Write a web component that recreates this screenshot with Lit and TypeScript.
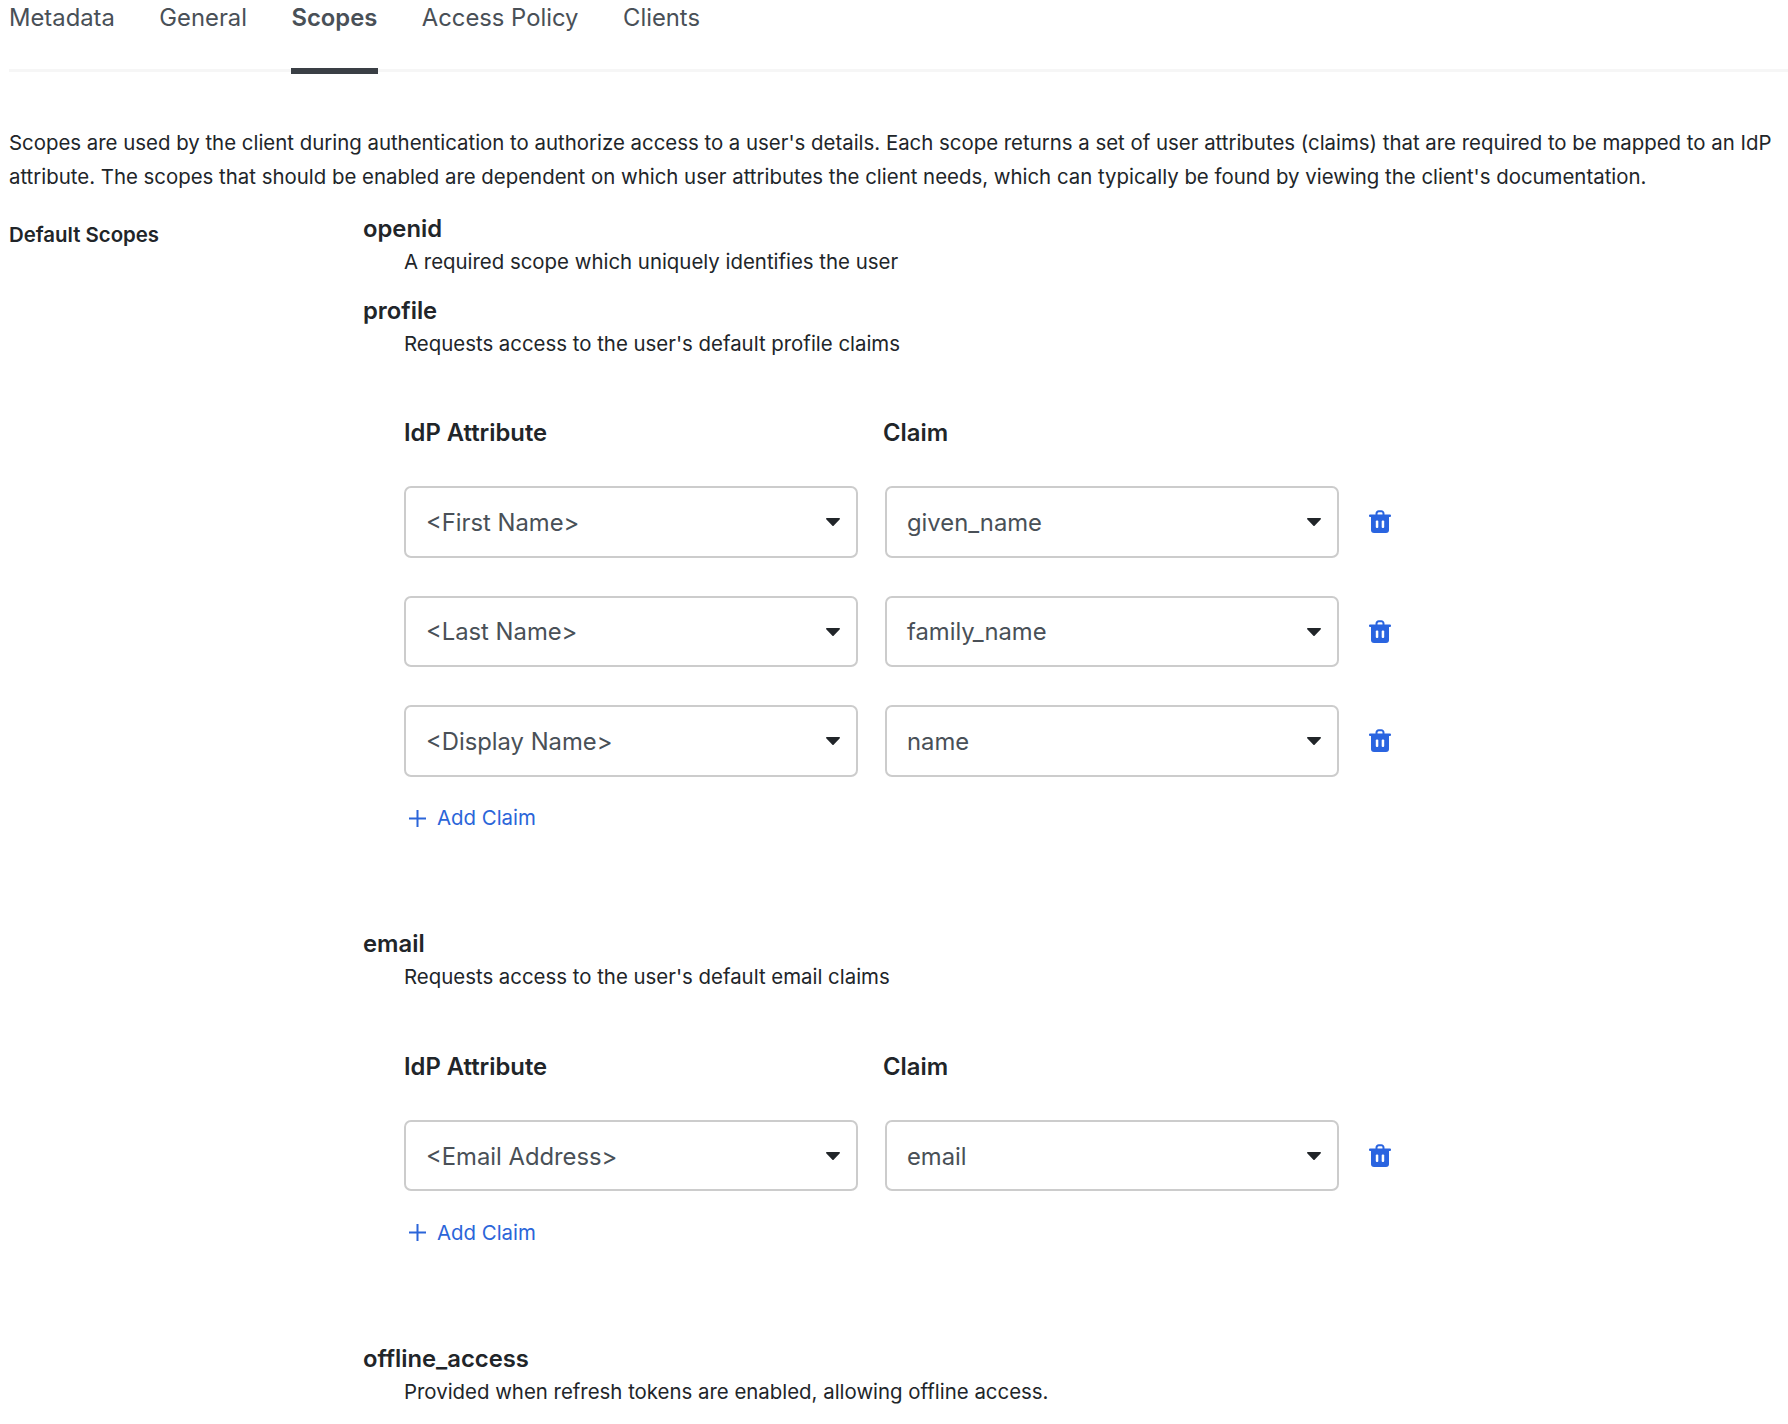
import { LitElement, css, html } from "lit";
import { customElement } from "lit/decorators.js";

type Mapping = { attr: string; claim: string };
type Scope = { name: string; desc: string; mappings?: Mapping[] };

const SCOPES: Scope[] = [
  { name: "openid", desc: "A required scope which uniquely identifies the user" },
  {
    name: "profile",
    desc: "Requests access to the user's default profile claims",
    mappings: [
      { attr: "<First Name>", claim: "given_name" },
      { attr: "<Last Name>", claim: "family_name" },
      { attr: "<Display Name>", claim: "name" },
    ],
  },
  {
    name: "email",
    desc: "Requests access to the user's default email claims",
    mappings: [{ attr: "<Email Address>", claim: "email" }],
  },
  { name: "offline_access", desc: "Provided when refresh tokens are enabled, allowing offline access." },
];

const TABS = ["Metadata", "General", "Scopes", "Access Policy", "Clients"];

@customElement("app-root")
export class AppRoot extends LitElement {
  static styles = css`
    :host {
      display: block;
      padding-left: 9px;
      background: #fff;
      color: #212529;
      font-family: Inter, "Liberation Sans", sans-serif;
      font-size: 20.4px;
      line-height: 34px;
    }

    .tabs {
      display: flex;
      gap: 44.5px;
      border-bottom: 3px solid #f6f6f6;
    }
    .tab {
      font-size: 23.8px;
      color: #495057;
      padding: 1px 0 33px;
      border-bottom: 6px solid transparent;
      margin-bottom: -5px;
    }
    .tab.active {
      font-weight: 600;
      border-bottom-color: #3a3f45;
      padding-inline: 1px;
      margin-inline: -1px;
    }

    .intro {
      margin: 54px 0 18px;
    }

    .body {
      display: grid;
      grid-template-columns: 354px 1fr;
    }
    .label {
      font-weight: 600;
      padding-top: 6px;
    }

    .scope {
      margin-bottom: 15.5px;
    }
    .scope-name {
      font-size: 23.8px;
      font-weight: 600;
    }
    .scope-desc {
      margin-left: 41px;
      line-height: 32px;
    }

    .claims {
      margin: 56.5px 0 92px 41px;
    }
    .claims-head {
      display: grid;
      grid-template-columns: 479px auto;
      font-size: 23.8px;
      font-weight: 600;
      margin-bottom: 36.2px;
    }

    .rows {
      display: flex;
      flex-direction: column;
      gap: 38px;
      margin-bottom: 24.5px;
    }
    .row {
      display: flex;
      align-items: center;
      gap: 27px;
    }
    .select {
      box-sizing: border-box;
      width: 454px;
      height: 71.5px;
      display: flex;
      align-items: center;
      justify-content: space-between;
      padding: 0 16px 0 20px;
      border: 2px solid #ccc;
      border-radius: 7px;
      font-size: 23.8px;
      color: #495057;
    }
    .select span {
      padding-top: 2px;
    }
    .caret {
      width: 14px;
      height: 8px;
      margin-top: 1px;
    }
    .trash {
      width: 22px;
      height: 23px;
      margin-left: 2.5px;
    }

    .add {
      display: flex;
      align-items: center;
      gap: 10px;
      padding-left: 4px;
      color: #2b65d9;
    }
    .add svg {
      width: 19px;
      height: 19px;
    }
  `;

  private renderRow(m: Mapping) {
    return html`
      <div class="row">
        ${[m.attr, m.claim].map(
          (v) => html`
            <div class="select" role="combobox">
              <span>${v}</span>
              <svg class="caret" viewBox="0 0 14 8"><path d="M.8 0h12.4c.7 0 1 .8.6 1.300L7.600 7.700a.8.8 0 0 1-1.200 0L.2 1.300C-.2.800.1 0 .8 0z" fill="#212529"/></svg>
            </div>
          `
        )}
        <svg class="trash" viewBox="0 0 22 23">
          <path d="M7.500 5V3.500A2.200 2.200 0 0 1 9.700 1.300h2.600a2.200 2.200 0 0 1 2.200 2.200V5" fill="none" stroke="#2a64e0" stroke-width="2"/>
          <rect x="0" y="4.600" width="22" height="2.400" rx="1" fill="#2a64e0"/>
          <path d="M2 6h18v14a3 3 0 0 1-3 3H5a3 3 0 0 1-3-3z" fill="#2a64e0"/>
          <rect x="6.800" y="10.500" width="2.500" height="7.500" rx="1" fill="#fff"/>
          <rect x="12.700" y="10.500" width="2.500" height="7.500" rx="1" fill="#fff"/>
        </svg>
      </div>
    `;
  }

  private renderScope(s: Scope) {
    return html`
      <div class="scope">
        <div class="scope-name">${s.name}</div>
        <div class="scope-desc">${s.desc}</div>
        ${s.mappings
          ? html`
              <div class="claims">
                <div class="claims-head"><span>IdP Attribute</span><span>Claim</span></div>
                <div class="rows">${s.mappings.map((m) => this.renderRow(m))}</div>
                <div class="add">
                  <svg viewBox="0 0 19 19"><path d="M9.500 1v17M1 9.500h17" stroke="#2b65d9" stroke-width="2" fill="none"/></svg>
                  <span>Add Claim</span>
                </div>
              </div>
            `
          : ""}
      </div>
    `;
  }

  render() {
    return html`
      <nav class="tabs">
        ${TABS.map((t) => html`<div class="tab ${t === "Scopes" ? "active" : ""}">${t}</div>`)}
      </nav>
      <p class="intro">
        Scopes are used by the client during authentication to authorize access to a user's details. Each scope returns a set of user attributes (claims) that are required to be mapped to an IdP attribute. The scopes that should be enabled are dependent on which user attributes the client needs, which can typically be found by viewing the client's documentation.
      </p>
      <div class="body">
        <div class="label">Default Scopes</div>
        <div>${SCOPES.map((s) => this.renderScope(s))}</div>
      </div>
    `;
  }
}
